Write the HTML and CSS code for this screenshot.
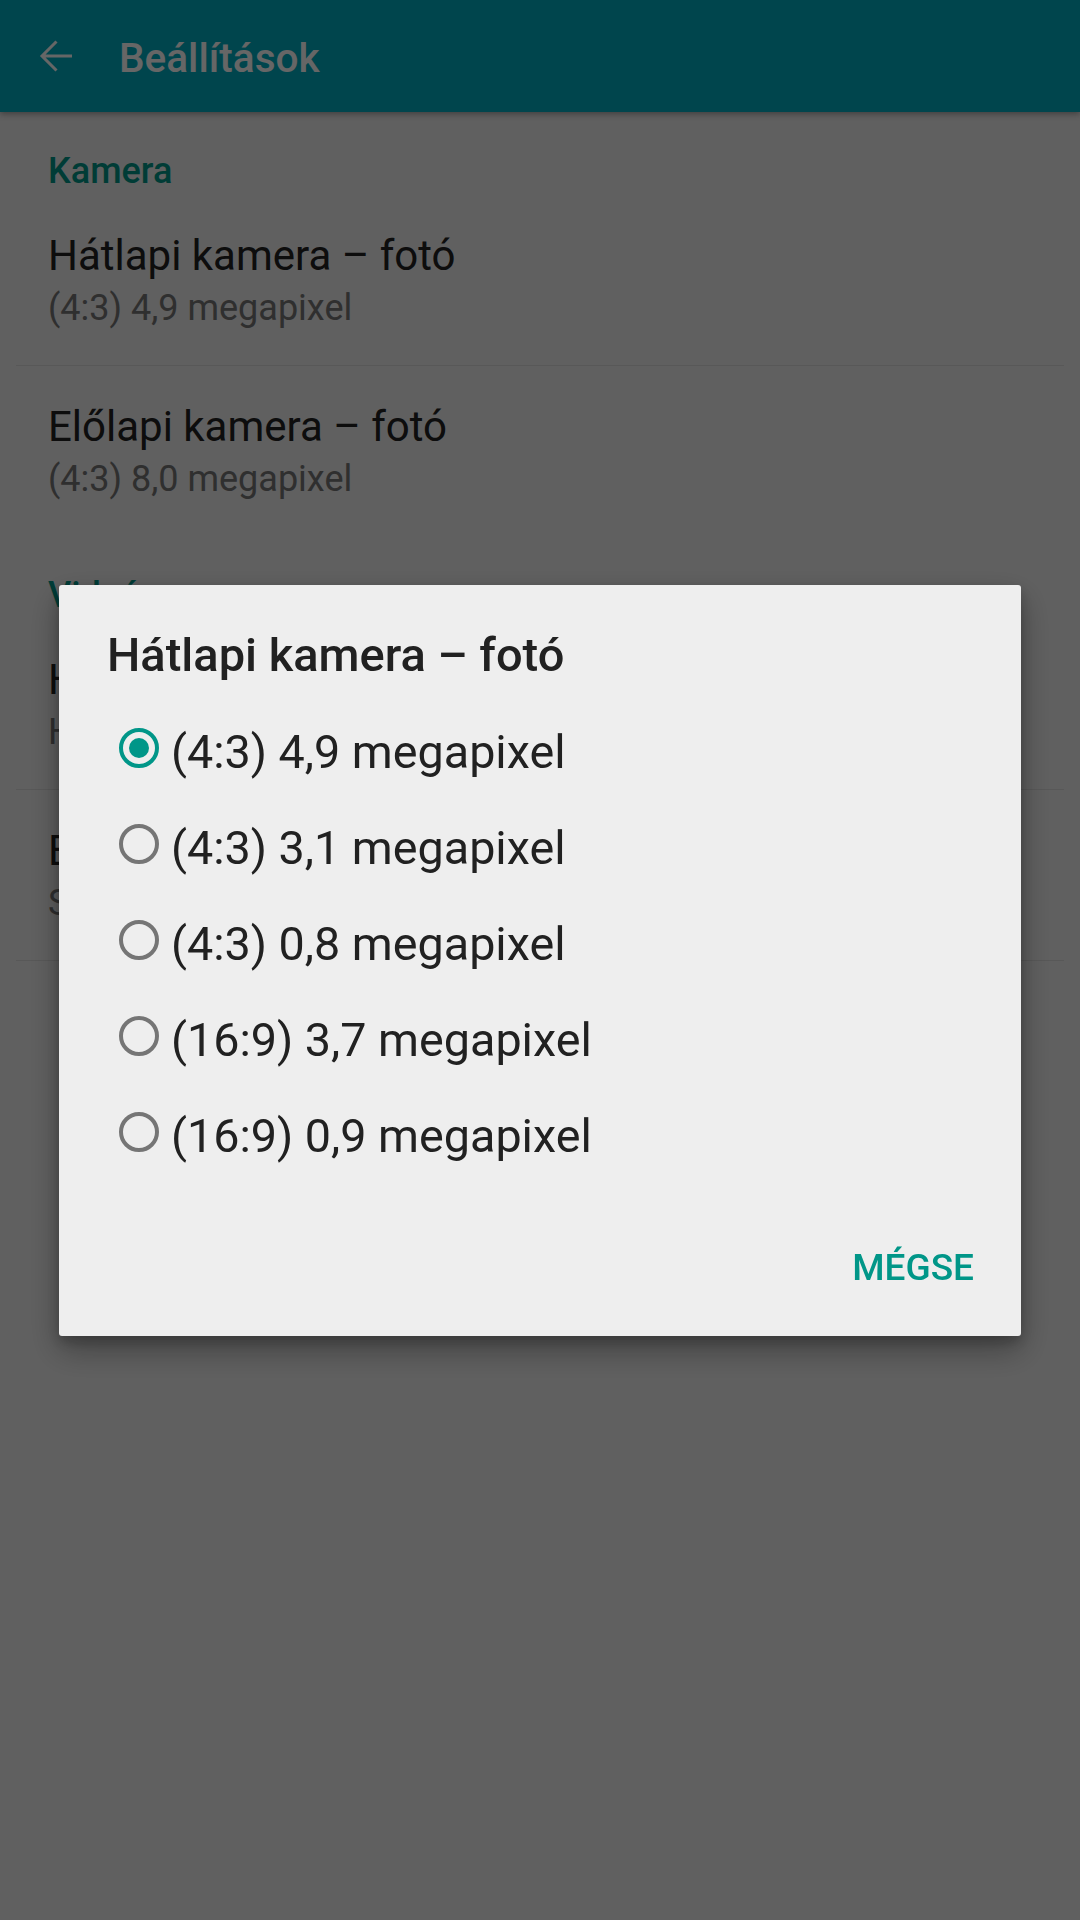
FILE: index.html
```html
<!DOCTYPE html>
<html lang="hu">
<head>
<meta charset="utf-8">
<title>Beállítások</title>
<link rel="stylesheet" href="styles.css">
</head>
<body>
<div class="screen">
  <header class="appbar">
    <svg class="back" viewBox="0 0 48 48" width="48" height="48" aria-hidden="true">
      <path d="M40 24H10.5M24.5 9.5L10 24l14.5 14.5" fill="none" stroke="#ffffff" stroke-width="3" stroke-linejoin="miter"/>
    </svg>
    <h1 class="appbar-title">Beállítások</h1>
  </header>
  <main class="prefs">
    <section class="category">
      <h2 class="category-title">Kamera</h2>
      <div class="pref pref--divided">
        <div class="pref-title">Hátlapi kamera – fotó</div>
        <div class="pref-summary">(4:3) 4,9 megapixel</div>
      </div>
      <div class="pref">
        <div class="pref-title">Előlapi kamera – fotó</div>
        <div class="pref-summary">(4:3) 8,0 megapixel</div>
      </div>
    </section>
    <section class="category">
      <h2 class="category-title">Videó</h2>
      <div class="pref pref--divided">
        <div class="pref-title">Hátlapi kamera – videó</div>
        <div class="pref-summary">HD 1080p</div>
      </div>
      <div class="pref pref--divided">
        <div class="pref-title">Előlapi kamera – videó</div>
        <div class="pref-summary">SD 480p</div>
      </div>
    </section>
  </main>
</div>
<div class="scrim">
  <div class="dialog" role="dialog">
    <h3 class="dialog-title">Hátlapi kamera – fotó</h3>
    <ul class="options">
      <li class="option option--checked"><span class="radio"></span><span class="option-label">(4:3) 4,9 megapixel</span></li>
      <li class="option"><span class="radio"></span><span class="option-label">(4:3) 3,1 megapixel</span></li>
      <li class="option"><span class="radio"></span><span class="option-label">(4:3) 0,8 megapixel</span></li>
      <li class="option"><span class="radio"></span><span class="option-label">(16:9) 3,7 megapixel</span></li>
      <li class="option"><span class="radio"></span><span class="option-label">(16:9) 0,9 megapixel</span></li>
    </ul>
    <div class="actions"><button class="btn" type="button">MÉGSE</button></div>
  </div>
</div>
</body>
</html>
```
FILE: styles.css
```css
* { box-sizing: border-box; }
html, body {
  margin: 0;
  padding: 0;
  width: 1080px;
  height: 1920px;
  overflow: hidden;
}
body {
  font-family: Roboto, "Noto Sans", "Liberation Sans", sans-serif;
  background: #efefef;
  color: #212121;
}
.screen {
  width: 1080px;
  height: 1920px;
  background: #efefef;
}
.appbar {
  height: 112px;
  background: #00acc1;
  display: flex;
  align-items: flex-start;
  box-shadow: 0 2px 6px rgba(0, 0, 0, 0.35);
  position: relative;
  z-index: 1;
}
.back {
  display: block;
  margin: 32px 0 0 32px;
  flex: none;
}
.appbar-title {
  margin: 0 0 0 39px;
  padding-top: 34px;
  font-size: 40.5px;
  line-height: 48px;
  font-weight: 500;
  color: #ffffff;
}
.prefs {
  display: flex;
  flex-direction: column;
}
.category {
  display: flex;
  flex-direction: column;
}
.category-title {
  margin: 0;
  height: 83px;
  padding: 37px 0 0 48px;
  font-size: 36px;
  line-height: 44px;
  font-weight: 500;
  color: #009688;
}
.pref {
  height: 170px;
  margin: 0 16px;
  padding: 36px 0 0 32px;
}
.pref--divided {
  height: 171px;
  border-bottom: 1px solid #dcdcdc;
}
.pref-title {
  font-size: 42px;
  line-height: 50px;
  color: #212121;
  white-space: nowrap;
}
.pref-summary {
  font-size: 36px;
  line-height: 55px;
  color: #757575;
  white-space: nowrap;
}
.scrim {
  position: fixed;
  inset: 0;
  background: rgba(0, 0, 0, 0.6);
  display: flex;
  align-items: center;
  justify-content: center;
  z-index: 2;
}
.dialog {
  width: 962px;
  background: #eeeeee;
  border-radius: 3px;
  padding: 42px 0 44px;
  box-shadow: 0 14px 32px rgba(0, 0, 0, 0.32), 0 6px 14px rgba(0, 0, 0, 0.22);
}
.dialog-title {
  margin: 0;
  padding-left: 48px;
  font-size: 47px;
  line-height: 56px;
  font-weight: 500;
  color: #212121;
}
.options {
  list-style: none;
  margin: 17px 0 0;
  padding: 0;
}
.option {
  height: 96px;
  display: flex;
  align-items: center;
  padding-left: 60px;
}
.radio {
  flex: none;
  width: 40px;
  height: 40px;
  border: 4px solid #757575;
  border-radius: 50%;
  display: flex;
  align-items: center;
  justify-content: center;
}
.option--checked .radio {
  border-color: #009688;
}
.option--checked .radio::after {
  content: "";
  width: 20px;
  height: 20px;
  border-radius: 50%;
  background: #009688;
}
.option-label {
  margin-left: 12px;
  padding-top: 8px;
  font-size: 46.7px;
  line-height: 88px;
  color: #212121;
  white-space: nowrap;
}
.actions {
  margin-top: 64px;
  display: flex;
  justify-content: flex-end;
  padding-right: 47px;
}
.btn {
  font-family: Roboto, "Noto Sans", "Liberation Sans", sans-serif;
  font-size: 37px;
  line-height: 48px;
  font-weight: 500;
  color: #009688;
  background: none;
  border: none;
  padding: 0;
  margin: 0;
}
```
